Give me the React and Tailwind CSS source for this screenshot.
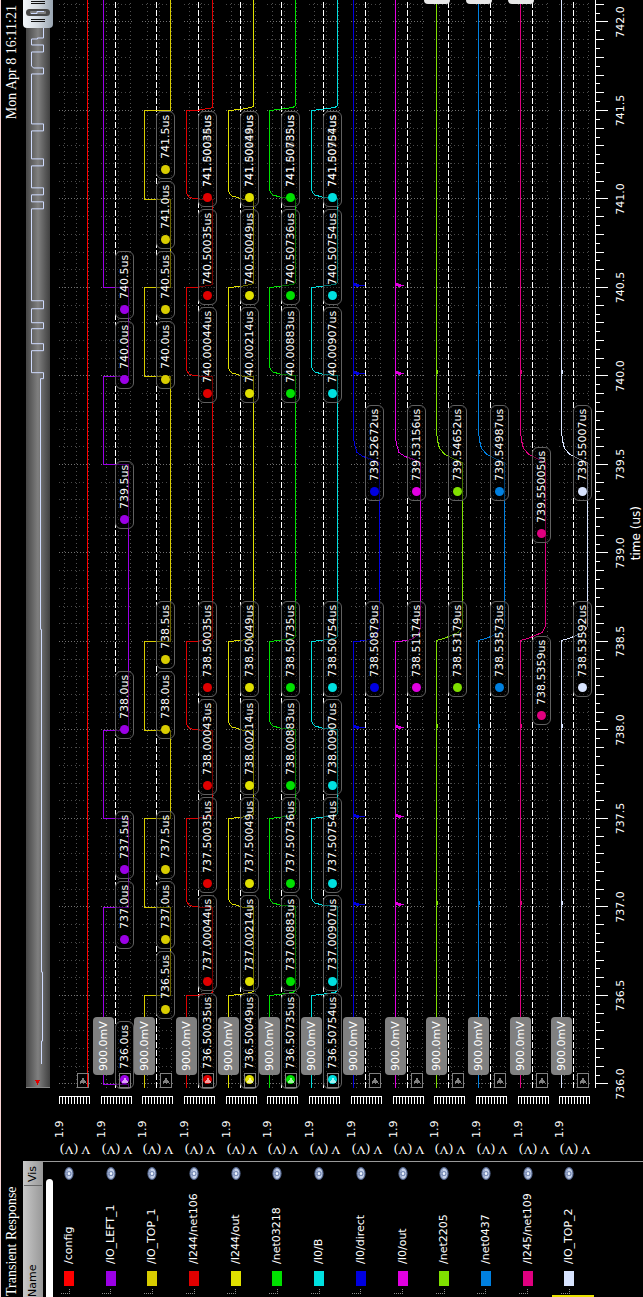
import React from "react";

const PLOT_W = 1088;
const PLOT_H = 542;
const HIGH = 9.5;
const LOW = 35.5;
const T0 = 736;

const timeX = (t) => 4 + 177 * (t - T0);
const rowY = (i) => Math.round((i * PLOT_H) / 13);
const lowY = (i) => Math.floor((i * PLOT_H) / 13 + 0.2) + LOW;
const pctX = (x) => `${(x / PLOT_W) * 100}%`;
const pctY = (y) => `${(y / PLOT_H) * 100}%`;

const RISES = {
  square: [[0, LOW], [0, HIGH]],
  fast: [[0, LOW], [0, 22], [1, 15], [2, 12], [4, 10.5], [6, HIGH]],
  medium: [[0, LOW], [0, 23], [2, 17], [3, 13], [5, 11], [8, HIGH]],
  slow: [[0, LOW], [1, 28], [2, 20], [4, 13], [6, 11], [9, HIGH]],
  gate: [[2, LOW], [5, 28], [8, 19], [12, 13], [20, 10.5], [28, HIGH]],
  late: [[2, LOW], [6, 26], [10, 18], [16, 12.5], [24, 10.5], [33, HIGH]],
};
const FALLS = {
  square: [[0, HIGH], [0, LOW]],
  fast: [[0, HIGH], [0, 21], [1, 24], [2, 32], [3, LOW]],
  medium: [[0, HIGH], [1, 21], [2, 27], [3, 32], [4, LOW]],
  slow: [[0, HIGH], [1, 18], [2, 26], [3, 33], [5, LOW]],
  gate: [[0, HIGH], [1, 22], [3, 27], [7, 32], [14, LOW]],
  late: [[1, HIGH], [3, 17], [6, 24], [9, 31], [15, LOW]],
};

const CLOCK = [736.5, 737, 737.5, 738, 738.5, 740, 740.5, 741, 741.5];
const GATE = [738.5, 739.5];

const SIGNALS = [
  { name: "/config", color: "#ff0000", kind: "flat", edges: [] },
  {
    name: "/IO_LEFT_1", color: "#9b00e6", kind: "square", startLow: true,
    edges: [736, 737, 737.5, 738, 739.5, 740, 740.5],
    marks: [["740.5us", 310], ["740.0us", 380], ["739.5us", 520], ["738.0us", 730], ["737.5us", 870], ["737.0us", 940], ["736.0us", 1080]],
  },
  {
    name: "/IO_TOP_1", color: "#d8cc00", kind: "square", edges: CLOCK,
    marks: [["741.5us", 170], ["741.0us", 240], ["740.5us", 310], ["740.0us", 380], ["738.5us", 660], ["738.0us", 730], ["737.5us", 870], ["737.0us", 940], ["736.5us", 1010]],
  },
  {
    name: "/I244/net106", color: "#e00000", kind: "fast", edges: CLOCK, ghost: "741.00044us",
    marks: [["741.50035us", 198], ["740.50035us", 296], ["740.00044us", 394], ["738.50035us", 688], ["738.00043us", 786], ["737.50035us", 884], ["737.00044us", 982], ["736.50035us", 1080]],
  },
  {
    name: "/I244/out", color: "#e0e000", kind: "medium", edges: CLOCK, ghost: "741.00214us",
    marks: [["741.50049us", 198], ["740.50049us", 296], ["740.00214us", 394], ["738.50049us", 688], ["738.00214us", 786], ["737.50049us", 884], ["737.00214us", 982], ["736.50049us", 1080]],
  },
  {
    name: "/net03218", color: "#00e000", kind: "slow", edges: CLOCK, ghost: "741.00883us",
    marks: [["741.50735us", 198], ["740.50736us", 296], ["740.00883us", 394], ["738.50735us", 688], ["738.00883us", 786], ["737.50736us", 884], ["737.00883us", 982], ["736.50735us", 1080]],
  },
  {
    name: "/I0/B", color: "#00e0e0", kind: "slow", edges: CLOCK, ghost: "741.00907us",
    marks: [["741.50754us", 198], ["740.50754us", 296], ["740.00907us", 394], ["738.50754us", 688], ["738.00907us", 786], ["737.50754us", 884], ["737.00907us", 982], ["736.50754us", 1080]],
  },
  { name: "/I0/direct", color: "#0000e0", kind: "gate", edges: GATE, spike: 11, marks: [["739.52672us", 492], ["738.50879us", 688]] },
  { name: "/I0/out", color: "#e000e0", kind: "gate", edges: GATE, spike: 8, marks: [["739.53156us", 492], ["738.51174us", 688]] },
  { name: "/net2205", color: "#80e000", kind: "late", edges: GATE, notch: true, overflow: true, marks: [["739.54652us", 492], ["738.53179us", 688]] },
  { name: "/net0437", color: "#0080e0", kind: "late", edges: GATE, notch: true, overflow: true, marks: [["739.54987us", 492], ["738.53573us", 688]] },
  { name: "/I245/net109", color: "#e00080", kind: "late", edges: GATE, notch: true, overflow: true, marks: [["739.55005us", 534], ["738.5359us", 716]] },
  { name: "/IO_TOP_2", color: "#d8e4ff", kind: "late", edges: GATE, notch: true, marks: [["739.55007us", 492], ["738.53592us", 688]] },
];

function tracePath(sig, i) {
  const y0 = rowY(i);
  if (sig.kind === "flat") return `M0 ${y0 + LOW}H${PLOT_W}`;
  let high = !sig.startLow;
  const pts = [[0, high ? HIGH : LOW]];
  sig.edges.forEach((t) => {
    const shape = (high ? FALLS : RISES)[sig.kind];
    shape.forEach(([dx, y]) => pts.push([timeX(t) + dx, y]));
    high = !high;
  });
  pts.push([PLOT_W, high ? HIGH : LOW]);
  return "M" + pts.map(([x, y]) => `${x} ${y === LOW ? lowY(i) : y0 + y}`).join("L");
}

function glitchPath(sig, y0) {
  const y = y0 + HIGH;
  if (sig.spike) {
    return [737, 737.5, 738, 740, 740.5]
      .map((t) => {
        const x = Math.floor(timeX(t)) + 2.5;
        return `M${x} ${y}v${sig.spike}M${x + 1} ${y}v5M${x - 1} ${y + 2}v3M${x + 2} ${y}v2`;
      })
      .join("");
  }
  return [737, 738, 740].map((t) => `M${timeX(t) + 2} ${y + 1}h4`).join("");
}

function Waveforms() {
  const tenths = Array.from({ length: 62 }, (_, k) => k);
  return (
    <svg className="block h-full w-full" viewBox={`0 0 ${PLOT_W} ${PLOT_H}`} preserveAspectRatio="none" fill="none" shapeRendering="crispEdges" aria-hidden="true">
      {SIGNALS.map((sig, i) => {
        const y0 = rowY(i);
        return (
          <g key={sig.name}>
            <path d={`M0 ${y0 + 12.5}H${PLOT_W}M0 ${y0 + 24.5}H${PLOT_W}M0 ${y0 + 36.5}H${PLOT_W}`} stroke="#505050" strokeDasharray="1 3" />
            {tenths.map((k) => {
              const x = Math.floor(4 + 17.7 * k) + 0.5;
              return <path key={k} d={`M${x} ${y0 + 7}V${y0 + 38}`} stroke={k % 5 === 0 ? "#707070" : "#484848"} strokeDasharray={k % 5 === 0 ? "1 2" : "1 3"} />;
            })}
            {i > 0 && <path d={`M0 ${y0 + 21.5}H${PLOT_W}`} stroke="#fff" strokeDasharray="6 2" />}
            <path d={tracePath(sig, i)} stroke={sig.color} />
            {(sig.spike || sig.notch) && <path d={glitchPath(sig, y0)} stroke={sig.color} />}
          </g>
        );
      })}
    </svg>
  );
}

function Marker({ label, dotY, row, color, ghost }) {
  return (
    <div
      className="absolute flex h-[19px] items-center rounded-md border border-[#606060] bg-black/50 pr-[3px] pl-1 whitespace-nowrap"
      style={{ left: pctX(PLOT_W - dotY - 9), top: pctY(rowY(row) + 21) }}
    >
      <span className="mr-[6px] size-[9px] shrink-0 rounded-full" style={{ backgroundColor: color }} />
      <span className="relative leading-4">
        {label}
        {ghost && <span className="absolute inset-0 opacity-45" aria-hidden="true">{ghost}</span>}
      </span>
    </div>
  );
}

function Annotations() {
  return SIGNALS.map((sig, i) => (
    <React.Fragment key={sig.name}>
      {(sig.marks || []).map(([label, dotY], k) => (
        <Marker key={label} label={label} dotY={dotY} row={i} color={sig.color} ghost={k === 0 ? sig.ghost : undefined} />
      ))}
      {i > 0 && (
        <div className="absolute flex h-[21px] w-[58px] items-center justify-center rounded bg-[#808080] leading-4" style={{ left: pctX(13), top: pctY(rowY(i) - 1) }}>
          900.0mV
        </div>
      )}
      <svg className="absolute h-3 w-[15px]" style={{ left: 0, top: pctY(rowY(i) + 25) }} viewBox="0 0 15 12" shapeRendering="crispEdges" aria-hidden="true">
        <rect x="0.5" y="0.5" width="14" height="11" fill="none" stroke="#808080" />
        <path d="M5 2.5L11 6L5 9.5Z" fill={i === 1 || (i > 2 && i < 7) ? "#ffffffa0" : "#808080"} />
      </svg>
      {sig.overflow && <div className="absolute right-0 h-[26px] w-1 rounded-l bg-[#e8e8e8]" style={{ top: pctY(rowY(i) - 3) }} />}
    </React.Fragment>
  ));
}

function Overview() {
  const trace =
    "M23 15.5H46V16.5H115V15.5H458V14.5H709V17.5H715V5.5H737V17.5H744V5.5H759V17.5H765V5.5H779V17.5H787V5.5H879V17.5H886V5.5H893V17.5H900V5.5H922V17.5H929V5.5H957V17.5H964V5.5H1014V17.5H1020V7.5L1022 5.5H1036V17.5H1043V5.5H1049V11.5H1050V17.5H1060";
  return (
    <div className="flex h-[30px] items-start">
      <div className="mt-1 h-6 min-w-0 flex-1 border-l border-[#888] bg-linear-to-b from-[#464646] via-[#808080] to-[#404040]">
        <svg className="block h-full w-full" viewBox="0 0 1060 24" preserveAspectRatio="none" fill="none" shapeRendering="crispEdges" aria-hidden="true">
          <path d={trace} stroke="#d0dcff" />
          <path d="M2 11.5L7 9V14Z" fill="#e00000" />
        </svg>
      </div>
      <button type="button" aria-label="Zoom window" className="mt-px h-[30px] w-7 shrink-0 rounded-l-[4px] bg-linear-to-b from-[#f4f8fc] via-[#d4dae0] to-[#98a4b0]">
        <svg className="block h-full w-full" viewBox="0 0 28 30" fill="none" aria-hidden="true">
          <rect x="12" y="3" width="7" height="24" rx="3.5" fill="#484848" />
          <rect x="14" y="7" width="3" height="16" rx="1" fill="#808080" />
          <path d="M14.5 8v6h2v7" stroke="#d0dcff" />
          <path d="M6.5 8v14M8.5 8v14M24.5 8v14M26.5 8v14" stroke="#111" shapeRendering="crispEdges" />
        </svg>
      </button>
    </div>
  );
}

function TimeAxis() {
  const ticks = Array.from({ length: 123 }, (_, k) => {
    const x = Math.floor(4 + 8.85 * k) + 0.5;
    return `M${x} 2V${k % 10 === 0 ? 14 : k % 2 === 0 ? 10 : 6}`;
  }).join("");
  const labels = Array.from({ length: 13 }, (_, k) => T0 + k / 2);
  return (
    <div className="relative h-[49px]">
      <svg className="block h-4 w-full" viewBox={`0 0 ${PLOT_W} 16`} preserveAspectRatio="none" fill="none" stroke="#fff" shapeRendering="crispEdges" aria-hidden="true">
        <path d={`M0 1.5H${PLOT_W}${ticks}`} />
      </svg>
      {labels.map((t) => (
        <span key={t} className="absolute top-[19px] -translate-x-1/2 leading-4" style={{ left: pctX(timeX(t)) }}>
          {t.toFixed(1)}
        </span>
      ))}
      <span className="absolute top-[34px] left-[51%] -translate-x-1/2 text-xs leading-4">time (us)</span>
    </div>
  );
}

function ValueAxes() {
  return (
    <div className="flex w-[73px] shrink-0 flex-col pt-[30px] pb-[49px]">
      {SIGNALS.map((sig) => (
        <div key={sig.name} className="flex min-h-0 flex-1 items-start">
          <span className="mt-2 ml-[3px] w-4 rotate-180 font-['Liberation_Serif',serif] text-[13px] leading-4 whitespace-nowrap [writing-mode:vertical-rl]">V (V)</span>
          <span className="ml-1 w-[18px] leading-4">1.9</span>
          <svg className="mt-[7px] ml-4 h-[31px] w-2" viewBox="0 0 8 31" fill="none" stroke="#fff" shapeRendering="crispEdges" aria-hidden="true">
            <path d="M7.5 0V31M0 .5h7M0 3.5h7M0 6.5h7M0 9.5h7M0 12.5h7M0 15.5h7M0 18.5h7M0 21.5h7M0 24.5h7M0 27.5h7M0 30.5h7" />
          </svg>
        </div>
      ))}
    </div>
  );
}

function Eye() {
  return (
    <svg className="block h-[10px] w-[13px]" viewBox="0 0 13 10" aria-hidden="true">
      <ellipse cx="6.5" cy="5" rx="6.4" ry="4.6" fill="#5a6c94" />
      <ellipse cx="6.5" cy="5" rx="5.2" ry="3.4" fill="#c4d0e8" />
      <path d="M2.5 3.5Q6.5 .8 10.5 3.5" fill="none" stroke="#8c9cc0" />
      <circle cx="6.5" cy="5" r="2.6" fill="#7c8fb8" />
      <ellipse cx="6.5" cy="5" rx="1.5" ry="1.2" fill="#f0f6ff" />
    </svg>
  );
}

function Legend() {
  return (
    <div className="flex w-34 shrink-0 flex-col pt-px">
      <div className="flex h-5 shrink-0 items-center bg-linear-to-b from-[#c8c8c8] to-[#989898] text-black">
        <span className="w-[111px]">Name</span>
        <span className="h-[18px] border-l border-[#686868] pl-[3px] leading-[18px]">Vis</span>
      </div>
      <div className="flex min-h-0 flex-1 flex-col border-r border-[#999]">
        <div className="mt-[3px] mr-[17px] h-[7px] shrink-0 rounded-r bg-white" />
        <ul className="-mt-px mb-[49px] flex min-h-0 flex-1 flex-col">
          {SIGNALS.map((sig, i) => (
            <li key={sig.name} className={i === 12 ? "min-h-0 flex-1 shadow-[inset_2px_0_0_#e8e000]" : "min-h-0 flex-1"}>
              <div className="flex h-[34px] items-center">
                <span className="mr-[3px] ml-[3px] h-[9px] w-[5px] shrink-0 -translate-y-1 border-b border-l border-dotted border-[#909090]" />
                <span className="h-[10px] w-[15px] shrink-0" style={{ backgroundColor: sig.color }} />
                <span className="ml-[7px] leading-4 whitespace-nowrap">{sig.name}</span>
                <button type="button" aria-label={`Toggle ${sig.name}`} className="mr-[5px] ml-auto">
                  <Eye />
                </button>
              </div>
            </li>
          ))}
        </ul>
      </div>
    </div>
  );
}

export default function App() {
  return (
    <div className="h-screen w-full overflow-hidden bg-black">
      <div className="flex h-[100vw] w-[100vh] origin-top-left translate-y-[100vh] -rotate-90 flex-col border-t border-[#f8d4d4] bg-black font-['DejaVu_Sans',sans-serif] text-[11px] text-white">
        <header className="flex h-[21px] shrink-0 items-center justify-between pr-[5px] pl-px font-['Liberation_Serif',serif] text-sm leading-5">
          <h1>Transient Response</h1>
          <time>Mon Apr 8 16:11:21</time>
        </header>
        <main className="flex min-h-0 flex-1">
          <Legend />
          <ValueAxes />
          <section className="flex min-w-0 flex-1 flex-col">
            <Overview />
            <div className="relative min-h-0 flex-1">
              <Waveforms />
              <Annotations />
            </div>
            <TimeAxis />
          </section>
        </main>
      </div>
    </div>
  );
}
